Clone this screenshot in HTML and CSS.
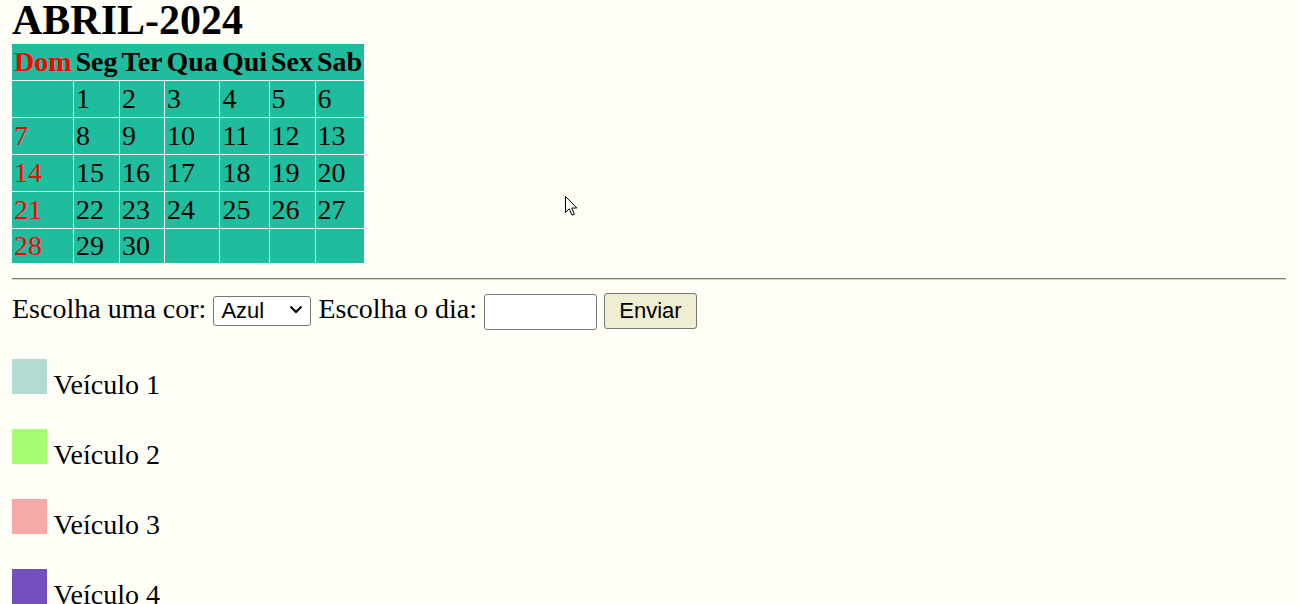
FILE: index.html
```html
<!DOCTYPE html>
<html lang="pt-BR">
<head>
<meta charset="utf-8">
<title>ABRIL-2024</title>
<link rel="stylesheet" href="styles.css">
</head>
<body>
<h1 class="title">ABRIL-2024</h1>
<table class="calendar">
  <thead>
    <tr><th class="sun">Dom</th><th>Seg</th><th>Ter</th><th>Qua</th><th>Qui</th><th>Sex</th><th>Sab</th></tr>
  </thead>
  <tbody>
    <tr><td class="sun"></td><td>1</td><td>2</td><td>3</td><td>4</td><td>5</td><td>6</td></tr>
    <tr><td class="sun">7</td><td>8</td><td>9</td><td>10</td><td>11</td><td>12</td><td>13</td></tr>
    <tr><td class="sun">14</td><td>15</td><td>16</td><td>17</td><td>18</td><td>19</td><td>20</td></tr>
    <tr><td class="sun">21</td><td>22</td><td>23</td><td>24</td><td>25</td><td>26</td><td>27</td></tr>
    <tr class="last-row"><td class="sun">28</td><td>29</td><td>30</td><td></td><td></td><td></td><td></td></tr>
  </tbody>
</table>
<hr class="divider">
<form class="picker">
  <label>Escolha uma cor:</label> <span class="select-wrap"><select class="color-select"><option>Azul</option><option>Verde</option><option>Rosa</option><option>Roxo</option></select><svg class="chevron" width="14" height="9" viewBox="0 0 14 9" aria-hidden="true"><path d="M1.5 1.5 L7 7 L12.5 1.5" fill="none" stroke="#000" stroke-width="2"/></svg></span> <label>Escolha o dia:</label> <input class="day-input" type="text"> <button class="send" type="button">Enviar</button>
</form>
<div class="vehicles">
  <p class="vehicle"><span class="swatch swatch-1"></span> Veículo 1</p>
  <p class="vehicle"><span class="swatch swatch-2"></span> Veículo 2</p>
  <p class="vehicle"><span class="swatch swatch-3"></span> Veículo 3</p>
  <p class="vehicle"><span class="swatch swatch-4"></span> Veículo 4</p>
</div>
<svg class="cursor" width="13" height="21" viewBox="0 0 13 21" aria-hidden="true">
  <path d="M0.5 0.5 L0.5 16.5 L4.3 12.8 L7 19.2 L9.4 18.2 L6.8 12 L11.8 12 Z" fill="#ffffff" stroke="#000000" stroke-width="1" stroke-linejoin="miter"/>
</svg>
</body>
</html>
```

FILE: styles.css
```css
html, body {
  background: #fffff8;
}
body {
  margin: 0 12px;
  font-family: "Liberation Serif", "Times New Roman", serif;
  font-size: 28px;
  color: #000;
  position: relative;
  height: 604px;
  overflow: hidden;
}
.title {
  margin: 0 0 4px 0;
  font-size: 42px;
  line-height: 40px;
  font-weight: bold;
}
.calendar {
  border-collapse: collapse;
  background: #1fbd9d;
}
.calendar th,
.calendar td {
  padding: 0 2px;
  line-height: 36px;
  height: 36px;
  font-size: 28px;
  vertical-align: middle;
}
.calendar th {
  font-weight: bold;
  text-align: center;
  border: none;
  border-bottom: 1px solid #ffffff;
}
.calendar td {
  text-align: left;
  border: 1px solid #ffffff;
}
.calendar .last-row td {
  height: 34px;
  line-height: 34px;
  border-bottom: none;
}
.calendar tr > :first-child {
  border-left: none;
}
.calendar tr > :last-child {
  border-right: none;
}
.calendar .sun {
  color: #ff0000;
}
.divider {
  margin: 15px 0 10px 0;
  border: 0;
  height: 0;
  border-top: 1px solid #7f7f6c;
  border-bottom: 1px solid #d6d6c8;
}
.picker {
  margin: 0;
  padding-bottom: 1px;
  line-height: 38px;
}
.select-wrap {
  position: relative;
  display: inline-block;
}
.color-select {
  -webkit-appearance: none;
  appearance: none;
  box-sizing: border-box;
  width: 98px;
  height: 30px;
  padding: 0 0 0 7px;
  font-family: "Liberation Sans", Arial, sans-serif;
  font-size: 22px;
  line-height: 28px;
  border: 1px solid #767676;
  border-radius: 3px;
  background: #ffffff;
  color: #000;
  vertical-align: baseline;
}
.chevron {
  position: absolute;
  right: 8px;
  top: 50%;
  margin-top: -4px;
  pointer-events: none;
}
.day-input {
  box-sizing: border-box;
  width: 113px;
  height: 36px;
  border: 1px solid #767676;
  border-radius: 3px;
  background: #ffffff;
  font-size: 20px;
  vertical-align: baseline;
}
.send {
  box-sizing: border-box;
  width: 93px;
  height: 36px;
  border: 1px solid #767676;
  border-radius: 3px;
  background: #efedd2;
  font-family: "Liberation Sans", Arial, sans-serif;
  font-size: 22px;
  color: #000;
  vertical-align: baseline;
}
.vehicles {
  margin-top: 0;
}
.vehicle {
  margin: 28px 0;
}
.swatch {
  display: inline-block;
  width: 35px;
  height: 35px;
}
.swatch-1 { background: #b3dbd2; }
.swatch-2 { background: #a4ff72; }
.swatch-3 { background: #f6aaa8; }
.swatch-4 { background: #744fc0; }
.cursor {
  position: absolute;
  left: 553px;
  top: 196px;
}
```
